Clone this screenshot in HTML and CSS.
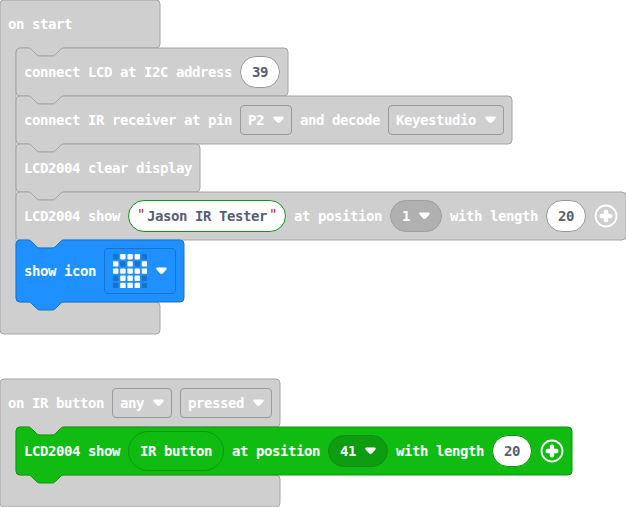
FILE: index.html
```
<!DOCTYPE html>
<html lang="en">
<head>
<meta charset="utf-8">
<title>Blocks</title>
<link rel="stylesheet" href="styles.css">
</head>
<body>
<svg class="defs" width="0" height="0" aria-hidden="true">
  <defs>
    <path id="arrow" d="M1.4 .5H9.600Q10.800 .5 10.800 1.600Q10.700 2.400 10 3.100L7 6.200Q5.500 7.600 4 6.200L1 3.100Q.3 2.400 .2 1.600Q.2 .5 1.400 .5Z"/>
    <g id="plus">
      <circle cx="12" cy="12" r="10.500" fill="none" stroke="#fff" stroke-width="1.800"/>
      <path d="M12 7.700V16.300M7.700 12H16.300" fill="none" stroke="#fff" stroke-width="4.400" stroke-linecap="round"/>
    </g>
    <rect id="led" width="5.400" height="5.400" rx=".8"/>
  </defs>
</svg>
<main class="workspace">
  <section class="event">
    <svg class="shape off" width="160" height="334"><path d="M0 4a4 4 0 0 1 4-4H156a4 4 0 0 1 4 4V44a4 4 0 0 1-4 4H64c-2 0-3 1-4 2l-4 4c-1 1-2 2-4 2h-12c-2 0-3-1-4-2l-4-4c-1-1-2-2-4-2H20a4 4 0 0 0-4 4V298a4 4 0 0 0 4 4H156a4 4 0 0 1 4 4V330a4 4 0 0 1-4 4H4a4 4 0 0 1-4-4Z"/></svg>
    <header class="row head"><span>on start</span></header>
    <div class="stack">
      <div class="row block">
        <svg class="shape off" width="272" height="48"><path d="M0 4a4 4 0 0 1 4-4H12c2 0 3 1 4 2l4 4c1 1 2 2 4 2h12c2 0 3-1 4-2l4-4c1-1 2-2 4-2H268a4 4 0 0 1 4 4V44a4 4 0 0 1-4 4H48c-2 0-3 1-4 2l-4 4c-1 1-2 2-4 2h-12c-2 0-3-1-4-2l-4-4c-1-1-2-2-4-2H4a4 4 0 0 1-4-4Z"/></svg>
        <span>connect LCD at I2C address</span><span class="number">39</span>
      </div>
      <div class="row block">
        <svg class="shape off" width="496" height="48"><path d="M0 4a4 4 0 0 1 4-4H12c2 0 3 1 4 2l4 4c1 1 2 2 4 2h12c2 0 3-1 4-2l4-4c1-1 2-2 4-2H492a4 4 0 0 1 4 4V44a4 4 0 0 1-4 4H48c-2 0-3 1-4 2l-4 4c-1 1-2 2-4 2h-12c-2 0-3-1-4-2l-4-4c-1-1-2-2-4-2H4a4 4 0 0 1-4-4Z"/></svg>
        <span>connect IR receiver at pin</span>
        <span class="select"><span>P2</span><svg class="arrow"><use href="#arrow"/></svg></span>
        <span>and decode</span>
        <span class="select"><span>Keyestudio</span><svg class="arrow"><use href="#arrow"/></svg></span>
      </div>
      <div class="row block">
        <svg class="shape off" width="184" height="48"><path d="M0 4a4 4 0 0 1 4-4H12c2 0 3 1 4 2l4 4c1 1 2 2 4 2h12c2 0 3-1 4-2l4-4c1-1 2-2 4-2H180a4 4 0 0 1 4 4V44a4 4 0 0 1-4 4H48c-2 0-3 1-4 2l-4 4c-1 1-2 2-4 2h-12c-2 0-3-1-4-2l-4-4c-1-1-2-2-4-2H4a4 4 0 0 1-4-4Z"/></svg>
        <span>LCD2004 clear display</span>
      </div>
      <div class="row block">
        <svg class="shape off" width="610" height="48"><path d="M0 4a4 4 0 0 1 4-4H12c2 0 3 1 4 2l4 4c1 1 2 2 4 2h12c2 0 3-1 4-2l4-4c1-1 2-2 4-2H606a4 4 0 0 1 4 4V44a4 4 0 0 1-4 4H48c-2 0-3 1-4 2l-4 4c-1 1-2 2-4 2h-12c-2 0-3-1-4-2l-4-4c-1-1-2-2-4-2H4a4 4 0 0 1-4-4Z"/></svg>
        <span>LCD2004 show</span>
        <span class="string"><span class="quote">"</span><span>Jason IR Tester</span><span class="quote">"</span></span>
        <span>at position</span>
        <span class="select round"><span>1</span><svg class="arrow"><use href="#arrow"/></svg></span>
        <span>with length</span><span class="number">20</span>
        <svg class="plus"><use href="#plus"/></svg>
      </div>
      <div class="row block tall">
        <svg class="shape basic" width="168" height="62"><path d="M0 4a4 4 0 0 1 4-4H12c2 0 3 1 4 2l4 4c1 1 2 2 4 2h12c2 0 3-1 4-2l4-4c1-1 2-2 4-2H164a4 4 0 0 1 4 4V58a4 4 0 0 1-4 4H48c-2 0-3 1-4 2l-4 4c-1 1-2 2-4 2h-12c-2 0-3-1-4-2l-4-4c-1-1-2-2-4-2H4a4 4 0 0 1-4-4Z"/></svg>
        <span>show icon</span>
        <span class="select image">
          <svg class="leds" viewBox="0 0 34.2 34.2">
            <g><use href="#led"/><use href="#led" x="28.8"/><use href="#led" x="7.2" y="7.2"/><use href="#led" x="21.6" y="7.2"/><use href="#led" y="21.6"/><use href="#led" x="28.8" y="21.6"/><use href="#led" y="28.8"/><use href="#led" x="28.8" y="28.8"/></g>
            <g class="lit"><use href="#led" x="7.2"/><use href="#led" x="14.4"/><use href="#led" x="21.6"/><use href="#led" y="7.2"/><use href="#led" x="14.4" y="7.2"/><use href="#led" x="28.8" y="7.2"/><use href="#led" y="14.4"/><use href="#led" x="7.2" y="14.4"/><use href="#led" x="14.4" y="14.4"/><use href="#led" x="21.6" y="14.4"/><use href="#led" x="28.8" y="14.4"/><use href="#led" x="7.2" y="21.6"/><use href="#led" x="14.4" y="21.6"/><use href="#led" x="21.6" y="21.6"/><use href="#led" x="7.2" y="28.8"/><use href="#led" x="14.4" y="28.8"/><use href="#led" x="21.6" y="28.8"/></g>
          </svg>
          <svg class="arrow"><use href="#arrow"/></svg>
        </span>
      </div>
    </div>
  </section>

  <section class="event">
    <svg class="shape off" width="280" height="128"><path d="M0 4a4 4 0 0 1 4-4H276a4 4 0 0 1 4 4V44a4 4 0 0 1-4 4H64c-2 0-3 1-4 2l-4 4c-1 1-2 2-4 2h-12c-2 0-3-1-4-2l-4-4c-1-1-2-2-4-2H20a4 4 0 0 0-4 4V92a4 4 0 0 0 4 4H276a4 4 0 0 1 4 4V124a4 4 0 0 1-4 4H4a4 4 0 0 1-4-4Z"/></svg>
    <header class="row head">
      <span>on IR button</span>
      <span class="select"><span>any</span><svg class="arrow"><use href="#arrow"/></svg></span>
      <span class="select"><span>pressed</span><svg class="arrow"><use href="#arrow"/></svg></span>
    </header>
    <div class="stack">
      <div class="row block">
        <svg class="shape lcd" width="556" height="48"><path d="M0 4a4 4 0 0 1 4-4H12c2 0 3 1 4 2l4 4c1 1 2 2 4 2h12c2 0 3-1 4-2l4-4c1-1 2-2 4-2H552a4 4 0 0 1 4 4V44a4 4 0 0 1-4 4H48c-2 0-3 1-4 2l-4 4c-1 1-2 2-4 2h-12c-2 0-3-1-4-2l-4-4c-1-1-2-2-4-2H4a4 4 0 0 1-4-4Z"/></svg>
        <span>LCD2004 show</span>
        <span class="variable">IR button</span>
        <span>at position</span>
        <span class="select round green"><span>41</span><svg class="arrow"><use href="#arrow"/></svg></span>
        <span>with length</span><span class="number on-green">20</span>
        <svg class="plus"><use href="#plus"/></svg>
      </div>
    </div>
  </section>
</main>
</body>
</html>
```
FILE: styles.css
```
* { box-sizing: border-box; }

body {
  margin: 0;
  background: #fff;
  color: #fff;
  font: bold 14px/16px "DejaVu Sans Mono", monospace;
  letter-spacing: calc(8px - 1ch);
  white-space: nowrap;
  overflow: hidden;
}

.defs { position: absolute; }

.workspace {
  display: flex;
  flex-direction: column;
  gap: 45px;
}

.event {
  position: relative;
  padding-bottom: 32px;
}

.row {
  position: relative;
  display: flex;
  align-items: center;
  gap: 8px;
  height: 48px;
  padding: 0 8px;
}

.row > * { flex: none; }

.stack { padding-left: 16px; }

.block.tall { height: 62px; }

.shape {
  position: absolute;
  left: 0;
  top: 0;
  overflow: visible;
}

.shape.off { fill: #cfcfcf; stroke: #a6a6a6; }
.shape.basic { fill: #1e90ff; stroke: #1873cc; }
.shape.lcd { fill: #11bc12; stroke: #0e960e; }

.row > span { position: relative; }

.select {
  display: flex;
  align-items: center;
  gap: 9px;
  height: 30px;
  padding: 0 7px;
  border: 1px solid #999;
  border-radius: 4px;
}

.select.round {
  height: 32px;
  padding: 0 11px;
  border-radius: 16px;
  background: #b0b0b0;
  border-color: #a0a0a0;
}

.select.green {
  background: #0e9c10;
  border-color: #0e8f0e;
}

.select.image {
  width: 72px;
  height: 46px;
  padding-left: 8px;
  border-color: #1873cc;
}

.arrow {
  width: 11px;
  height: 8px;
  fill: #fff;
}

.number,
.string {
  display: flex;
  align-items: center;
  justify-content: center;
  height: 32px;
  border: 1px solid #999;
  border-radius: 16px;
  background: #fff;
  color: #575e75;
}

.number { width: 40px; }

.number.on-green { border-color: #0e960e; }

.string {
  width: 158px;
  gap: 2px;
  border-color: #0e960e;
}

.quote {
  color: #b32424;
  font-weight: normal;
  transform: translateY(-2px);
}

.variable {
  display: flex;
  align-items: center;
  height: 40px;
  padding: 0 11px;
  border: 1px solid #0e960e;
  border-radius: 20px;
}

.plus {
  position: relative;
  width: 24px;
  height: 24px;
}

.leds {
  width: 34.200px;
  height: 34.200px;
  fill: #1873cc;
}

.leds .lit { fill: #fff; }
```
